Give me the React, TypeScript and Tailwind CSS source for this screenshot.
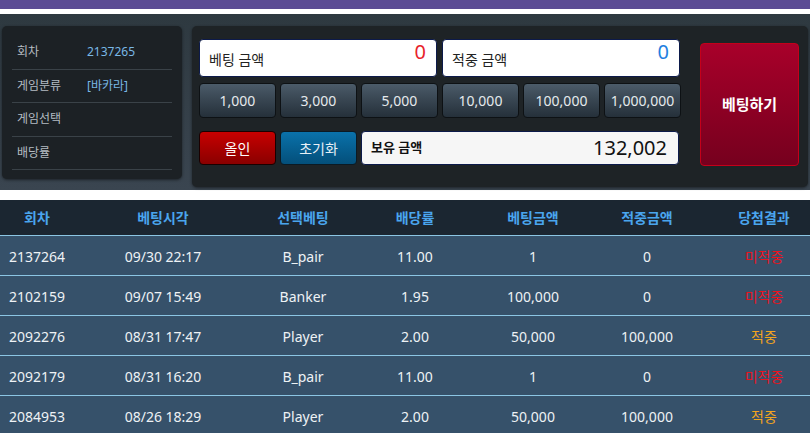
import React from "react";

const info = [
  { k: "회차", v: "2137265" },
  { k: "게임분류", v: "[바카라]" },
  { k: "게임선택", v: "" },
  { k: "배당률", v: "" },
];

const chips = ["1,000", "3,000", "5,000", "10,000", "100,000", "1,000,000"];

const rows = [
  ["2137264", "09/30 22:17", "B_pair", "11.00", "1", "0", "미적중"],
  ["2102159", "09/07 15:49", "Banker", "1.95", "100,000", "0", "미적중"],
  ["2092276", "08/31 17:47", "Player", "2.00", "50,000", "100,000", "적중"],
  ["2092179", "08/31 16:20", "B_pair", "11.00", "1", "0", "미적중"],
  ["2084953", "08/26 18:29", "Player", "2.00", "50,000", "100,000", "적중"],
];

const heads = ["회차", "베팅시각", "선택베팅", "배당률", "베팅금액", "적중금액", "당첨결과"];

const grid = "grid grid-cols-[74px_178px_102px_122px_114px_114px_120px] w-[824px]";

export default function App() {
  return (
    <div
      className="w-[810px] h-[433px] overflow-hidden bg-white"
      style={{ fontFamily: '"Noto Sans", "Noto Sans CJK KR", sans-serif' }}
    >
      <div className="h-[9px] bg-[#5b4b94]" />
      <div className="h-[5px] bg-white" />
      <div className="h-[176px] bg-gradient-to-b from-[#2e3940] to-[#3a4550] flex pl-[2px] pt-[12px] gap-[10px]">
        {/* left panel */}
        <div className="w-[180px] h-[153px] bg-[#1c2125] rounded-[5px] shadow-[0_1px_3px_rgba(0,0,0,0.5)] px-[10px] pt-[10px]">
          {info.map((r) => (
            <div key={r.k} className="h-[33.5px] border-b border-[#3a4248] flex items-center text-[12px]">
              <span className="w-[75px] pl-[5px] text-[#b4bcc2]">{r.k}</span>
              <span className="text-[#79b8e6]">{r.v}</span>
            </div>
          ))}
        </div>
        {/* right panel */}
        <div className="w-[616px] h-[161px] bg-[#1e2326] rounded-[5px] shadow-[0_1px_3px_rgba(0,0,0,0.5)] pl-[7px] pt-[13px] flex gap-[19px]">
          <div className="w-[482px] flex flex-col">
            <div className="flex gap-[5px]">
              <div className="w-[238px] h-[38px] bg-white border border-[#0c1a4a] rounded-[4px] relative">
                <span className="absolute left-[9px] top-[9px] text-[14px] text-[#222]">베팅 금액</span>
                <span className="absolute right-[10px] top-[-3px] text-[20px] text-[#e8232b]">0</span>
              </div>
              <div className="w-[238px] h-[38px] bg-white border border-[#0c1a4a] rounded-[4px] relative">
                <span className="absolute left-[9px] top-[9px] text-[14px] text-[#222]">적중 금액</span>
                <span className="absolute right-[10px] top-[-3px] text-[20px] text-[#1f7fe0]">0</span>
              </div>
            </div>
            <div className="flex gap-[4px] mt-[6px]">
              {chips.map((c) => (
                <div
                  key={c}
                  className="w-[77px] h-[35px] rounded-[4px] border border-[#0d1114] bg-gradient-to-b from-[#4b5b69] to-[#25303a] flex items-center justify-center text-[14px] text-[#e4e9ec]"
                >
                  {c}
                </div>
              ))}
            </div>
            <div className="flex gap-[4px] mt-[13px]">
              <div className="w-[77px] h-[34px] rounded-[4px] border border-[#1a0000] bg-gradient-to-b from-[#c80000] to-[#8a0000] flex items-center justify-center text-[14px] text-white">
                올인
              </div>
              <div className="w-[77px] h-[34px] rounded-[4px] border border-[#0b1a24] bg-gradient-to-b from-[#0a72ab] to-[#044f7a] flex items-center justify-center text-[14px] text-[#e8f0f6]">
                초기화
              </div>
              <div className="w-[318px] h-[34px] rounded-[4px] border border-[#0c1a4a] bg-[#f6f6f6] flex items-center justify-between pl-[9px] pr-[11px]">
                <span className="text-[13px] font-bold text-[#111]">보유 금액</span>
                <span className="text-[20px] text-[#111]">132,002</span>
              </div>
            </div>
          </div>
          <div className="w-[99px] h-[123px] mt-[4px] rounded-[4px] border border-[#c4001a] bg-gradient-to-b from-[#a8002a] to-[#76001e] flex items-center justify-center text-[15px] font-bold text-white">
            베팅하기
          </div>
        </div>
      </div>
      <div className="h-[10px] bg-white" />
      {/* table */}
      <div className={`${grid} h-[36px] bg-[#1b2631] border-b border-[#8cc6e4] items-center`}>
        {heads.map((h) => (
          <div key={h} className="text-center text-[14px] font-bold text-[#4aa5ee]">
            {h}
          </div>
        ))}
      </div>
      {rows.map((r, i) => (
        <div key={i} className={`${grid} h-[40px] bg-[#36516a] border-b border-[#8cc6e4] items-center`}>
          {r.map((c, j) => (
            <div
              key={j}
              className={`text-center text-[14px] pt-[2px] ${
                j === 6 ? (c === "적중" ? "text-[#f2a41e]" : "text-[#e8141e]") : "text-[#eef2f5]"
              }`}
            >
              {c}
            </div>
          ))}
        </div>
      ))}
    </div>
  );
}
